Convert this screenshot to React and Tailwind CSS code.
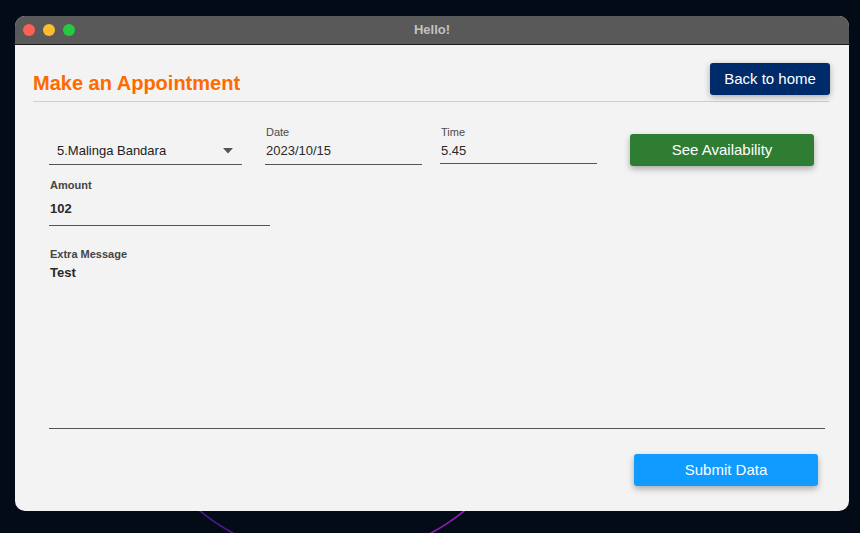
import React from "react";

const font = { fontFamily: '"Liberation Sans", Arial, sans-serif' };

function Field({ label, value, width, pb = "pb-[4px]", children }) {
  return (
    <div className={`flex flex-col ${width}`}>
      <div className="h-[14px] text-[11px] leading-[14px] text-[#4a4a4a] pl-px">{label}</div>
      <div className={`mt-[3px] ${pb} border-b border-[#555555] flex items-center`}>
        {children || (
          <span className="text-[13px] leading-[18px] text-[#2a2a2a] pl-px">{value}</span>
        )}
      </div>
    </div>
  );
}

export default function App() {
  return (
    <div
      className="relative w-[860px] h-[533px] overflow-hidden bg-[#030b17] pt-[16px] pl-[15px]"
      style={font}
    >
      <svg className="absolute left-0 top-0" width="860" height="533" viewBox="0 0 860 533">
        <defs>
          <linearGradient id="arc" x1="0" x2="1" y1="0" y2="0">
            <stop offset="0" stopColor="#3a1780" />
            <stop offset="0.5" stopColor="#6a1aa0" />
            <stop offset="1" stopColor="#b41cc4" />
          </linearGradient>
        </defs>
        <circle cx="332" cy="349" r="209" fill="none" stroke="url(#arc)" strokeWidth="1.6" />
      </svg>

      <div className="relative z-10 w-[834px] h-[495px] rounded-[10px] overflow-hidden flex flex-col bg-[#f3f3f3]">
        {/* title bar */}
        <div className="h-[29px] shrink-0 bg-[#595959] border-b border-[#1c1c1c] flex items-center relative">
          <div className="flex items-center gap-[8px] pl-[8px]">
            <span className="w-[12px] h-[12px] rounded-full bg-[#fe5f57]" />
            <span className="w-[12px] h-[12px] rounded-full bg-[#febc2e]" />
            <span className="w-[12px] h-[12px] rounded-full bg-[#28c840]" />
          </div>
          <div className="absolute inset-0 flex items-center justify-center text-[13px] font-bold text-[#c2c2c2]">
            Hello!
          </div>
        </div>

        {/* content */}
        <div className="flex flex-col">
          {/* header */}
          <div className="ml-[18px] mr-[20px] mt-[17px] h-[40px] border-b border-[#cfcfcf] flex items-start justify-between">
            <h1 className="mt-[9px] text-[20px] leading-[24px] font-bold text-[#ff6a00]">
              Make an Appointment
            </h1>
            <button className="mt-[1px] w-[120px] h-[32px] rounded-[3px] bg-[#002b6b] text-white text-[15px] shadow-[0_2px_6px_rgba(0,0,0,0.3)] mr-[-1px]">
              Back to home
            </button>
          </div>

          {/* fields row */}
          <div className="flex items-start pl-[34px] mt-[23px]">
            <Field width="w-[193px]">
              <div className="w-full flex items-center justify-between pl-[8px] pr-[9px]">
                <span className="text-[13px] leading-[18px] text-[#222]">5.Malinga Bandara</span>
                <svg width="10" height="6" viewBox="0 0 10 6">
                  <path d="M0 0 L10 0 L5 5.5 Z" fill="#555" />
                </svg>
              </div>
            </Field>
            <div className="ml-[23px]">
              <Field label="Date" value="2023/10/15" width="w-[157px]" />
            </div>
            <div className="ml-[18px]">
              <Field label="Time" value="5.45" width="w-[157px]" pb="pb-[3px]" />
            </div>
            <button className="ml-[33px] mt-[9px] w-[184px] h-[32px] rounded-[3px] bg-[#2e7d32] text-white text-[15px] shadow-[0_3px_6px_rgba(0,0,0,0.3)]">
              See Availability
            </button>
          </div>

          {/* amount */}
          <div className="pl-[34px] mt-[12px] flex flex-col w-[255px]">
            <div className="text-[11px] leading-[14px] font-bold text-[#444] pl-px">Amount</div>
            <div className="mt-[8px] pb-[7px] border-b border-[#555555] text-[13px] leading-[18px] font-bold text-[#2a2a2a] pl-px">
              102
            </div>
          </div>

          {/* extra message */}
          <div className="pl-[34px] pr-[24px] mt-[21px] flex flex-col">
            <div className="text-[11px] leading-[14px] font-bold text-[#444] pl-px">Extra Message</div>
            <div className="mt-[3px] h-[165px] border-b border-[#555555] text-[13px] leading-[18px] font-bold text-[#2a2a2a] pl-px">
              Test
            </div>
          </div>

          {/* submit */}
          <div className="flex justify-end pr-[31px] mt-[25px]">
            <button className="w-[184px] h-[32px] rounded-[3px] bg-[#0f9bff] text-white text-[15px] shadow-[0_3px_6px_rgba(0,0,0,0.3)]">
              Submit Data
            </button>
          </div>
        </div>
      </div>
    </div>
  );
}
